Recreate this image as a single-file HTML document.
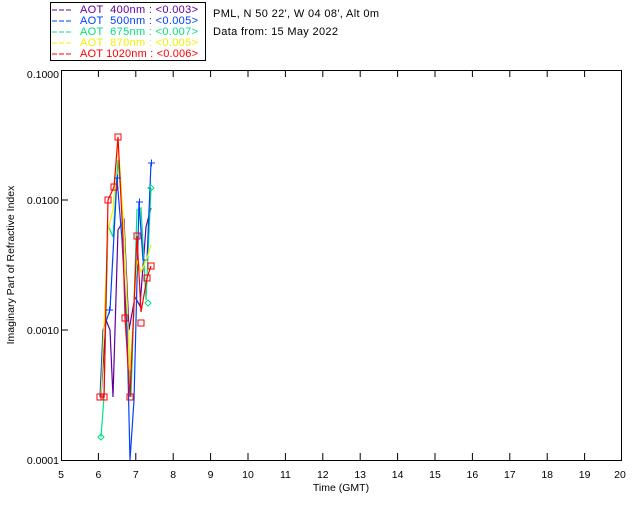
<!DOCTYPE html>
<html><head><style>
body{margin:0;background:#fff;}
svg{display:block;font-family:"Liberation Sans",sans-serif;}
</style></head><body>
<svg width="640" height="512" viewBox="0 0 640 512" xmlns="http://www.w3.org/2000/svg">
<rect width="640" height="512" fill="#fff"/>
<rect x="50.5" y="2.5" width="155" height="58" fill="#fff" stroke="#000"/>
<g font-size="11">
<line x1="52" y1="10" x2="72" y2="10" stroke="#6000a0" stroke-dasharray="5,2"/><text x="80" y="13" fill="#6000a0" xml:space="preserve" textLength="118">AOT  400nm : &lt;0.003&gt;</text>
<line x1="52" y1="21" x2="72" y2="21" stroke="#0040ff" stroke-dasharray="5,2"/><text x="80" y="24" fill="#0040ff" xml:space="preserve" textLength="118">AOT  500nm : &lt;0.005&gt;</text>
<line x1="52" y1="32" x2="72" y2="32" stroke="#00e080" stroke-dasharray="5,2"/><text x="80" y="35" fill="#00e080" xml:space="preserve" textLength="118">AOT  675nm : &lt;0.007&gt;</text>
<line x1="52" y1="43" x2="72" y2="43" stroke="#f0f000" stroke-dasharray="5,2"/><text x="80" y="46" fill="#f0f000" xml:space="preserve" textLength="118">AOT  870nm : &lt;0.005&gt;</text>
<line x1="52" y1="54" x2="72" y2="54" stroke="#ff0000" stroke-dasharray="5,2"/><text x="80" y="57" fill="#ff0000" xml:space="preserve" textLength="118">AOT 1020nm : &lt;0.006&gt;</text>
<text x="213" y="17" fill="#000" textLength="166">PML, N 50 22', W 04 08', Alt 0m</text>
<text x="213" y="35" fill="#000" textLength="125">Data from: 15 May 2022</text>
</g>
<rect x="61.5" y="70.5" width="560" height="390" fill="none" stroke="#000"/>
<g stroke="#000">
<line x1="61" y1="200" x2="68" y2="200"/><line x1="61" y1="330" x2="68" y2="330"/>
<path d="M98.4 70v7M135.8 70v7M173.2 70v7M210.6 70v7M248 70v7M285.4 70v7M322.8 70v7M360.2 70v7M397.6 70v7M435 70v7M472.4 70v7M509.8 70v7M547.2 70v7M584.6 70v7M98.4 461v-8M135.8 461v-8M173.2 461v-8M210.6 461v-8M248 461v-8M285.4 461v-8M322.8 461v-8M360.2 461v-8M397.6 461v-8M435 461v-8M472.4 461v-8M509.8 461v-8M547.2 461v-8M584.6 461v-8"/>
</g>
<g font-size="10.5" fill="#000" text-anchor="end">
<text x="59" y="78">0.1000</text><text x="59" y="204">0.0100</text><text x="59" y="334">0.0010</text><text x="59" y="464">0.0001</text>
</g>
<g font-size="10.5" fill="#000" text-anchor="middle">
<text x="61" y="478">5</text><text x="98.4" y="478">6</text><text x="135.8" y="478">7</text><text x="173.2" y="478">8</text><text x="210.6" y="478">9</text><text x="248" y="478">10</text><text x="285.4" y="478">11</text><text x="322.8" y="478">12</text><text x="360.2" y="478">13</text><text x="397.6" y="478">14</text><text x="435" y="478">15</text><text x="472.4" y="478">16</text><text x="509.8" y="478">17</text><text x="547.2" y="478">18</text><text x="584.6" y="478">19</text><text x="620" y="478">20</text>
<text x="341" y="491">Time (GMT)</text>
<text transform="translate(14,265) rotate(-90)">Imaginary Part of Refractive Index</text>
</g>
<g fill="none" stroke-width="1.2">
<polyline stroke="#6000a0" points="101,397 106,320 110,330 113,397 118,230 124,220 129,330 135,297 140,306 146,227 151,208"/>
<polyline stroke="#00e080" points="101,437 104,397 108,225 113,237 118,160 124,230 131,397 137,210 141,208 146,300 151,188"/>
<polyline stroke="#0040ff" points="100,397 103,330 110,310 117,178 122,240 127,330 130,460 134,400 139,202 143,260 147,260 151,163"/>
<polyline stroke="#f0f000" points="101,397 108,230 113,210 118,140 124,230 130,370 137,260 141,272 147,258 151,245"/>
<polyline stroke="#ff0000" points="100,397 104,397 108,200 114,187 118,137 123,240 125,318 130,397 137,236 141,312 147,278 151,266"/>
</g>
<g fill="none" stroke="#ff0000">
<rect x="97" y="394" width="6" height="6"/><rect x="101" y="394" width="6" height="6"/><rect x="105" y="197" width="6" height="6"/><rect x="111" y="184" width="6" height="6"/><rect x="115" y="134" width="6" height="6"/><rect x="122" y="315" width="6" height="6"/><rect x="127" y="394" width="6" height="6"/><rect x="134" y="233" width="6" height="6"/><rect x="138" y="320" width="6" height="6"/><rect x="144" y="275" width="6" height="6"/><rect x="148" y="263" width="6" height="6"/>
</g>
<g stroke="#0040ff">
<path d="M114 178h7M117.5 174.5v7M148 163h7M151.5 159.5v7M136 202h7M139.5 198.5v7M106 310h7M109.5 306.5v7"/>
</g>
<g stroke="#00e080" fill="none">
<path d="M101 434l3 3-3 3-3-3z M151 185l3 3-3 3-3-3z M148 300l3 3-3 3-3-3z"/>
</g>
</svg>
</body></html>
